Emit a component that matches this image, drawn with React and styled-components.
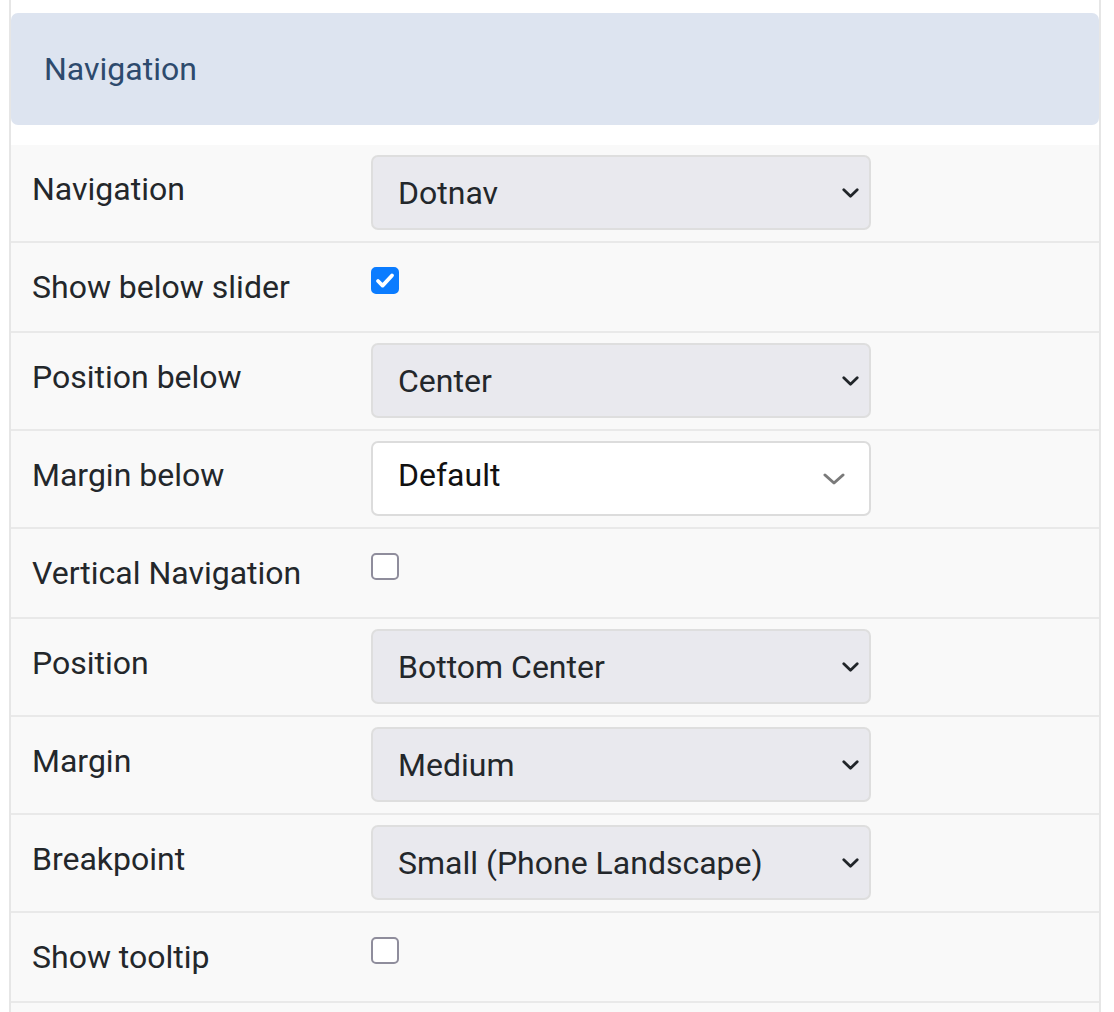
import React from 'react';
import styled, { createGlobalStyle } from 'styled-components';

const GlobalStyle = createGlobalStyle`
  html, body {
    margin: 0;
    padding: 0;
    background: #fff;
    font-family: Roboto, 'Liberation Sans', sans-serif;
    color: #212529;
  }
`;

const fields = [
  { label: 'Navigation', type: 'select', value: 'Dotnav' },
  { label: 'Show below slider', type: 'check', checked: true },
  { label: 'Position below', type: 'select', value: 'Center' },
  { label: 'Margin below', type: 'select', value: 'Default', plain: true },
  { label: 'Vertical Navigation', type: 'check' },
  { label: 'Position', type: 'select', value: 'Bottom Center' },
  { label: 'Margin', type: 'select', value: 'Medium' },
  { label: 'Breakpoint', type: 'select', value: 'Small (Phone Landscape)' },
  { label: 'Show tooltip', type: 'check' },
];

const Panel = styled.div`
  margin-left: 9px;
  width: 1092px;
  box-sizing: border-box;
  border-left: 2px solid #e6e6e6;
  border-right: 2px solid #e6e6e6;
  min-height: 1012px;
  display: flex;
  flex-direction: column;
`;

const Header = styled.div`
  margin-top: 13px;
  height: 112px;
  background: #dde4f0;
  border-radius: 7px;
  display: flex;
  align-items: center;
  padding-left: 33px;
  font-size: 32px;
  color: #2d4a6d;
`;

const Rows = styled.div`
  margin-top: 20px;
  flex: 1;
  background: #f9f9f9;
`;

const Row = styled.div`
  display: flex;
  align-items: stretch;
  border-bottom: 2px solid #e9e9e9;
`;

const Label = styled.div`
  width: 360px;
  box-sizing: border-box;
  padding-left: 21px;
  padding-bottom: ${p => (p.$select ? '8px' : '0')};
  display: flex;
  align-items: center;
  font-size: 32px;
  color: #23272b;
`;

const Control = styled.div`
  padding: ${p => (p.$select ? '10px 0 11px' : '24px 0 37px')};
`;

const SelectWrap = styled.div`
  position: relative;
  width: 500px;
  height: 75px;
`;

const Select = styled.select`
  appearance: none;
  -webkit-appearance: none;
  width: 100%;
  height: 100%;
  box-sizing: border-box;
  padding: ${p => (p.$plain ? '0 60px 8px 25px' : '0 60px 0 25px')};
  border: 2px solid ${p => (p.$plain ? '#dcdcdc' : '#dedede')};
  border-radius: 7px;
  background: ${p => (p.$plain ? '#fff' : '#e9e9ee')};
  font-family: Roboto, 'Liberation Sans', sans-serif;
  font-size: 32px;
  color: ${p => (p.$plain ? '#111' : '#23272b')};
  outline: none;
`;

const Chevron = styled.svg`
  position: absolute;
  top: 50%;
  right: ${p => (p.$plain ? '26px' : '12px')};
  transform: translateY(-50%);
  pointer-events: none;
`;

const Box = styled.span`
  display: flex;
  align-items: center;
  justify-content: center;
  width: 28px;
  height: 27px;
  box-sizing: border-box;
  border-radius: 5px;
  background: ${p => (p.$checked ? '#0b7cff' : '#fff')};
  border: 2px solid ${p => (p.$checked ? '#0b7cff' : '#8f8d9c')};
`;

function Dropdown({ value, plain }) {
  return (
    <SelectWrap>
      <Select $plain={plain} defaultValue={value}>
        <option>{value}</option>
      </Select>
      {plain ? (
        <Chevron $plain width="22" height="12" viewBox="0 0 22 12">
          <path d="M2 2l9 8 9-8" fill="none" stroke="#7a7a7a" strokeWidth="3" strokeLinecap="round" strokeLinejoin="round" />
        </Chevron>
      ) : (
        <Chevron width="17" height="10" viewBox="0 0 17 10">
          <path d="M1.8 1.8l6.7 6.4 6.7-6.4" fill="none" stroke="#212529" strokeWidth="2.8" strokeLinecap="round" strokeLinejoin="round" />
        </Chevron>
      )}
    </SelectWrap>
  );
}

function Checkbox({ checked }) {
  return (
    <Box $checked={checked}>
      {checked && (
        <svg width="20" height="17" viewBox="0 0 20 17">
          <path d="M3 9l4.6 4.6L17 3.5" fill="none" stroke="#fff" strokeWidth="3.8" strokeLinecap="round" strokeLinejoin="round" />
        </svg>
      )}
    </Box>
  );
}

export default function App() {
  return (
    <>
      <GlobalStyle />
      <Panel>
        <Header>Navigation</Header>
        <Rows>
          {fields.map(f => {
            const isSelect = f.type === 'select';
            return (
              <Row key={f.label}>
                <Label $select={isSelect}>{f.label}</Label>
                <Control $select={isSelect}>
                  {isSelect ? <Dropdown value={f.value} plain={f.plain} /> : <Checkbox checked={f.checked} />}
                </Control>
              </Row>
            );
          })}
        </Rows>
      </Panel>
    </>
  );
}
